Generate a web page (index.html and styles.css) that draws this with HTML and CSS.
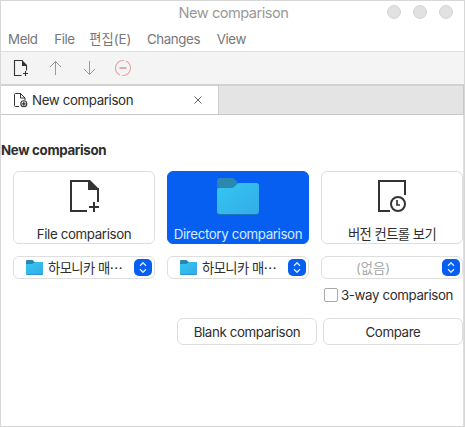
FILE: index.html
```html
<!DOCTYPE html>
<html lang="ko">
<head>
<meta charset="utf-8">
<title>New comparison</title>
<link rel="stylesheet" href="styles.css">
</head>
<body>
<svg class="defs" width="0" height="0" aria-hidden="true">
  <defs>
    <linearGradient id="front" x1="0" y1="0" x2="1" y2="1"><stop offset="0" stop-color="#32c8f1"/><stop offset="1" stop-color="#35abe8"/></linearGradient>
    <symbol id="folder" viewBox="0 0 42 37">
      <path d="M0 13V3Q0 0 3 0H15Q17 0 18.5 2L22 6V13Z" fill="#2b87b0"/>
      <path d="M2 35Q0 35 0 33V12Q0 10 2 10H14Q16 10 17.500 8.500L20 6Q21 5 23 5H39Q42 5 42 8V34Q42 37 39 37H3Q0 37 0 34Z" fill="#1c75bd"/>
      <path d="M0 12Q0 10 2 10H14Q16 10 17.500 8.500L20 6Q21 5 23 5H39Q42 5 42 8V33Q42 36 39 36H3Q0 36 0 33Z" fill="url(#front)"/>
    </symbol>
    <symbol id="sort" viewBox="0 0 18 17">
      <path d="M6 6.700L9 3.800L12 6.700M6 10.300L9 13.200L12 10.300" fill="none" stroke="#d9e7ff" stroke-width="1.400"/>
    </symbol>
  </defs>
</svg>
<div class="window">
  <header class="titlebar">
    <h1>New comparison</h1>
    <div class="controls"><i></i><i></i><i></i></div>
  </header>
  <nav class="menu">
    <span>Meld</span><span>File</span><span class="edit">편집(E)</span><span>Changes</span><span>View</span>
  </nav>
  <div class="toolbar">
    <svg width="16" height="16" viewBox="0 0 16 16"><path d="M8.500 15.500H1.500V.5H9.500M13.500 5V10.500" fill="none" stroke="#333" stroke-width="1.100"/><path d="M9 0L14 5V6H9Z" fill="#333"/><path d="M12.500 11V16M10 13.500H15" stroke="#333" stroke-width="1.100"/></svg>
    <svg width="16" height="16" viewBox="0 0 16 16"><path d="M8.500 15V1.500M3 7L8.500 1.500L14 7" fill="none" stroke="#999"/></svg>
    <svg width="16" height="16" viewBox="0 0 16 16"><path d="M8.500 1V14.500M3 9L8.500 14.500L14 9" fill="none" stroke="#999"/></svg>
    <svg class="stop" width="18" height="18" viewBox="0 0 18 18"><circle cx="9" cy="9" r="7.500" fill="none" stroke="#dfa3a6" stroke-width="1.100" stroke-dasharray="21.500 2.060" stroke-dashoffset="9"/><path d="M5.500 9H12.500" stroke="#dfa3a6" stroke-width="1.800"/></svg>
  </div>
  <div class="tabs">
    <div class="tab">
      <svg width="15" height="16" viewBox="0 0 15 16"><path d="M6 14.500H2.500Q1.500 14.500 1.500 13.500V2.500Q1.500 1.500 2.500 1.500H7.500L12 6V8M7.500 1.500V6H12" fill="none" stroke="#333"/><circle cx="10.800" cy="11.800" r="3" fill="#fff" stroke="#333" stroke-width="1.100"/><path d="M10.800 9.800V13.800M8.800 11.800H12.800" stroke="#333" stroke-width="1.300"/></svg>
      <span class="tab-label">New comparison</span>
      <svg class="close" width="10" height="10" viewBox="0 0 10 10"><path d="M1.500 1.500L8.500 8.500M8.500 1.500L1.500 8.500" stroke="#666"/></svg>
    </div>
  </div>
  <main>
    <h2>New comparison</h2>
    <div class="cards">
      <div class="card">
        <svg width="42" height="43" viewBox="0 1 42 43"><path d="M24 40H8V10H26M35 17V31" fill="none" stroke="#333" stroke-width="2"/><path d="M25 9H27L36 18V19H25Z" fill="#333"/><path d="M31 31V41M26 36H36" stroke="#333" stroke-width="2"/></svg>
        <span>File comparison</span>
      </div>
      <div class="card active">
        <svg width="42" height="43" viewBox="0 1 42 43"><use href="#folder" y="7" width="42" height="37"/></svg>
        <span>Directory comparison</span>
      </div>
      <div class="card">
        <svg width="42" height="43" viewBox="0 1 42 43"><path d="M19 40H8V10H34V24" fill="none" stroke="#333" stroke-width="2"/><circle cx="27" cy="33" r="7" fill="none" stroke="#333" stroke-width="2"/><path d="M26 29V34H29" fill="none" stroke="#333" stroke-width="1.700"/></svg>
        <span class="korean">버전 컨트롤 보기</span>
      </div>
    </div>
    <div class="combos">
      <div class="combo"><svg width="17" height="15" viewBox="0 0 42 37" preserveAspectRatio="none"><use href="#folder" width="42" height="37"/></svg><span class="korean">하모니카 매⋯</span><svg class="sort" width="18" height="17"><use href="#sort"/></svg></div>
      <div class="combo"><svg width="17" height="15" viewBox="0 0 42 37" preserveAspectRatio="none"><use href="#folder" width="42" height="37"/></svg><span class="korean">하모니카 매⋯</span><svg class="sort" width="18" height="17"><use href="#sort"/></svg></div>
      <div class="combo none"><span>(없음)</span><svg class="sort" width="18" height="17"><use href="#sort"/></svg></div>
    </div>
    <div class="check"><i></i><span>3-way comparison</span></div>
    <div class="actions">
      <div class="button"><span>Blank comparison</span></div>
      <div class="button"><span>Compare</span></div>
    </div>
  </main>
</div>
</body>
</html>
```
FILE: styles.css
```css
* { box-sizing: border-box; }
body { margin: 0; font: 13.3px/18px Inter, "Noto Sans CJK KR", sans-serif; letter-spacing: -0.37px; color: #2e2e2e; }
span, h1, h2 { white-space: nowrap; }
svg { display: block; flex: none; }
.defs { position: absolute; }
.korean { letter-spacing: -0.55px; }
.window { width: 465px; height: 427px; border: 1px solid #d7d7d7; background: #fff; display: flex; flex-direction: column; overflow: hidden; }
.titlebar { height: 25px; display: grid; grid-template-columns: 1fr auto 1fr; align-items: center; padding: 0 11px 2px 13px; }
.titlebar h1 { grid-column: 2; margin: 0; font-size: 14.6px; font-weight: 400; letter-spacing: -0.5px; color: #999; }
.controls { display: flex; justify-content: flex-end; align-items: center; gap: 12px; margin-top: -1px; }
.controls i { width: 14px; height: 14px; border-radius: 50%; background: #e1e1e1; border: 1px solid #d5d5d5; }
.menu { height: 26px; display: flex; align-items: center; gap: 16.5px; padding: 1px 0 0 7px; color: #777; border-bottom: 1px solid #dedede; }
.edit { letter-spacing: 0; margin: 0 -1px 0 -2px; }
.toolbar { height: 32px; background: #f4f4f4; display: flex; align-items: center; gap: 18px; padding-left: 12px; }
.stop { margin-left: -1px; }
.tabs { height: 31px; background: #e4e4e4; border: solid #c8c8c8; border-width: 2px 1px 1px 0; border-top-color: #d2d2d2; display: flex; }
.tab { width: 218px; background: #fff; border-right: 1px solid #d0d0d0; display: flex; align-items: center; padding: 0 15px 0 12px; }
.tab-label { margin-left: 4px; }
.close { margin-left: auto; }
main { flex: 1; border-right: 1px solid #dedede; padding-top: 26px; display: flex; flex-direction: column; }
h2 { margin: 0; height: 18px; font-size: 13.3px; line-height: 18px; font-weight: 700; letter-spacing: -0.32px; }
.cards, .combos { display: grid; grid-template-columns: repeat(3, 142px); gap: 12px; padding-left: 12px; }
.cards { margin-top: 12px; }
.card { height: 73px; border: 1px solid #dedede; border-radius: 6px; display: flex; flex-direction: column; align-items: center; }
.card span { margin-top: 10px; }
.active { background: #075ff2; border-color: #075ff2; color: #d6eaff; }
.combos { margin-top: 12px; }
.combo { height: 23px; border: 1px solid #dedede; border-radius: 6px; display: flex; align-items: center; padding: 0 2px 0 12px; }
.combo span { margin-left: 5px; }
.combo.none { color: #aaa; padding-left: 29px; letter-spacing: 0; }
.sort { margin-left: auto; background: #075ff2; border-radius: 5px; }
.check { margin: 7px 0 0 323px; display: flex; align-items: center; gap: 3px; height: 18px; }
.check i { width: 14px; height: 14px; border: 1px solid #aaa; border-radius: 2px; flex: none; }
.actions { margin-top: 14px; display: grid; grid-template-columns: 140px 140px; gap: 6px; padding-left: 176px; }
.button { height: 27px; border: 1px solid #dedede; border-radius: 6px; display: flex; align-items: center; justify-content: center; }
```
